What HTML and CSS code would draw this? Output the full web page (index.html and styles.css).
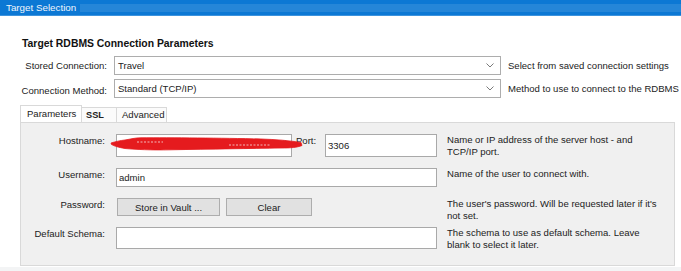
FILE: index.html
```html
<!DOCTYPE html>
<html lang="en">

<head>
    <meta charset="UTF-8">
    <meta name="viewport" content="width=device-width, initial-scale=1.0">
    <title>Target Selection</title>
    <link rel="stylesheet" href="styles.css">
</head>

<body>
    <div class="titlebar">
        <span class="title-text">Target Selection</span>
        <span class="title-fill"></span>
    </div>

    <div class="main">
        <div class="heading">Target RDBMS Connection Parameters</div>

        <div class="conn-grid">
            <div class="conn-label">Stored Connection:</div>
            <div class="combo">
                <span>Travel</span>
                <svg class="chevron" width="8" height="5" viewBox="0 0 8 5"><path d="M0.5 0.5 L4 4 L7.5 0.5" fill="none" stroke="#7a7a7a" stroke-width="1"/></svg>
            </div>
            <div class="conn-desc">Select from saved connection settings</div>

            <div class="conn-label label-low">Connection Method:</div>
            <div class="combo">
                <span>Standard (TCP/IP)</span>
                <svg class="chevron" width="8" height="5" viewBox="0 0 8 5"><path d="M0.5 0.5 L4 4 L7.5 0.5" fill="none" stroke="#7a7a7a" stroke-width="1"/></svg>
            </div>
            <div class="conn-desc">Method to use to connect to the RDBMS</div>
        </div>

        <div class="tabs">
            <div class="tab tab-active tab-params">Parameters</div>
            <div class="tab tab-ssl">SSL</div>
            <div class="tab tab-adv">Advanced</div>
        </div>

        <div class="panel">
            <div class="params">
                <!-- hostname row -->
                <div class="p-label">Hostname:</div>
                <div class="host-group">
                    <div class="host-input">
                        <span class="host-chevron">&#8964;</span>
                    </div>
                    <span class="port-label">Port:</span>
                    <input class="text-input port-input" type="text" value="3306">
                    <!-- redaction mark over the host name -->
                    <svg class="scribble" width="192" height="15" viewBox="0 0 192 15">
                        <path d="M0 6 C5 4.5 9 3.5 14 3 C20 2 24 0.8 30 0.8 C60 0.6 110 1 150 2 C165 2.5 178 3.5 190 5.5 L191 8.5 C186 10.5 180 11 170 11 C140 11.5 100 12 60 12.8 C40 13.2 25 12.5 14 11.5 C8 10.5 3 9 0.5 7.5 Z" fill="#e51b1e" stroke="#e51b1e" stroke-width="0.8"/>
                        <path d="M26 5 H52 M118 8 H160" stroke="#f3b8b8" stroke-width="1" stroke-dasharray="2 1.5"/>
                    </svg>
                </div>
                <div class="p-desc">Name or IP address of the server host - and<br>TCP/IP port.</div>

                <!-- username row -->
                <div class="p-label">Username:</div>
                <input class="text-input" type="text" value="admin">
                <div class="p-desc">Name of the user to connect with.</div>

                <!-- password row -->
                <div class="p-label">Password:</div>
                <div class="btn-group">
                    <button class="btn btn-vault">Store in Vault ...</button>
                    <button class="btn btn-clear">Clear</button>
                </div>
                <div class="p-desc">The user's password. Will be requested later if it's<br>not set.</div>

                <!-- schema row -->
                <div class="p-label">Default Schema:</div>
                <input class="text-input" type="text" value="">
                <div class="p-desc">The schema to use as default schema. Leave<br>blank to select it later.</div>
            </div>
        </div>
    </div>

    <div class="footer"></div>
</body>

</html>
```

FILE: styles.css
```css
body {
    margin: 0;
    padding: 0;
    width: 681px;
    font-family: "Liberation Sans", Arial, sans-serif;
    font-size: 9.55px;
    color: #222;
    background: #fff;
}

/* window title bar */
.titlebar {
    height: 16px;
    display: flex;
    align-items: center;
    background: #0c78d4;
    color: #eef5fc;
    padding-left: 6px;
    box-sizing: border-box;
    border-bottom: 1px solid #3d93dd;
}

.title-text {
    font-size: 9.8px;
    line-height: 12px;
}

.title-fill {
    flex: 1;
    height: 8px;
    margin-left: 4px;
    background-image: radial-gradient(circle, rgba(255, 255, 255, 0.22) 0.6px, transparent 0.8px);
    background-size: 2px 2px;
}

.main {
    height: 251px;
    padding-left: 20px;
    padding-right: 6px;
    box-sizing: border-box;
    overflow: hidden;
}

.heading {
    margin-top: 22px;
    padding-left: 2px;
    font-weight: bold;
    font-size: 10.4px;
    line-height: 12px;
    color: #111;
}

/* stored connection / method rows */
.conn-grid {
    margin-top: 6px;
    display: grid;
    grid-template-columns: 87px 387px 1fr;
    grid-template-rows: 19px 19px;
    column-gap: 7px;
    row-gap: 4px;
    align-items: center;
}

.conn-label {
    display: flex;
    justify-content: flex-end;
    white-space: nowrap;
    line-height: 12px;
}

.label-low {
    padding-top: 4px;
}

.combo {
    height: 19px;
    box-sizing: border-box;
    border: 1px solid #adadad;
    background: #fff;
    padding-left: 3px;
    padding-right: 6px;
    display: flex;
    align-items: center;
    justify-content: space-between;
}

.chevron {
    display: block;
}

.conn-desc {
    line-height: 12px;
    white-space: nowrap;
}

/* tabs */
.tabs {
    margin-top: 7px;
    height: 17px;
    display: flex;
    align-items: flex-end;
}

.tab {
    height: 15px;
    box-sizing: border-box;
    border: 1px solid #d9d9d9;
    border-bottom: none;
    background: #fbfbfb;
    line-height: 14px;
    margin-left: -1px;
}

.tab-active {
    height: 17px;
    background: #fff;
    margin-left: 0;
    line-height: 16px;
    position: relative;
    z-index: 1;
}

.tab-params {
    width: 62px;
    padding-left: 6px;
}

.tab-ssl {
    width: 36px;
    padding-left: 4px;
    font-weight: bold;
    font-size: 9.2px;
}

.tab-adv {
    width: 51px;
    padding-left: 5px;
}

.panel {
    height: 144px;
    box-sizing: border-box;
    border: 1px solid #d9d9d9;
    background: #f0f0f0;
    padding-top: 11px;
}

.params {
    display: grid;
    grid-template-columns: 84px 321px 1fr;
    grid-template-rows: 23px 19px 18px 22px;
    column-gap: 11px;
    row-gap: 11px;
    align-items: start;
}

.params .p-desc {
    margin-left: -1px;
}

.p-label {
    display: flex;
    justify-content: flex-end;
    white-space: nowrap;
    line-height: 12px;
    padding-top: 1px;
}

.p-desc {
    line-height: 12px;
    white-space: nowrap;
}

.text-input {
    height: 100%;
    width: 100%;
    box-sizing: border-box;
    border: 1px solid #a9a9a9;
    background: #fff;
    font-family: inherit;
    font-size: 9.55px;
    color: #222;
    padding: 0 2px;
    margin: 0;
    outline: none;
}

.host-group {
    position: relative;
    height: 23px;
    display: flex;
    align-items: flex-start;
}

.host-input {
    width: 176px;
    height: 23px;
    box-sizing: border-box;
    border: 1px solid #a9a9a9;
    background: #fff;
    display: flex;
    justify-content: flex-end;
    padding-right: 3px;
}

.host-chevron {
    font-size: 8px;
    color: #888;
    line-height: 10px;
}

.port-label {
    margin-left: 4px;
    line-height: 12px;
    padding-top: 1px;
}

.port-input {
    width: 112px;
    height: 23px;
    margin-left: auto;
}

.scribble {
    position: absolute;
    left: -5px;
    top: 3px;
    overflow: visible;
}

.btn-group {
    display: flex;
    gap: 6px;
    padding-left: 1px;
}

.btn {
    height: 18px;
    box-sizing: border-box;
    border: 1px solid #adadad;
    background: #e1e1e1;
    font-family: inherit;
    font-size: 9.55px;
    color: #222;
    padding: 0;
    margin: 0;
}

.btn-vault {
    width: 103px;
}

.btn-clear {
    width: 86px;
}

.footer {
    height: 4px;
    background: #f3f4f5;
}
```
